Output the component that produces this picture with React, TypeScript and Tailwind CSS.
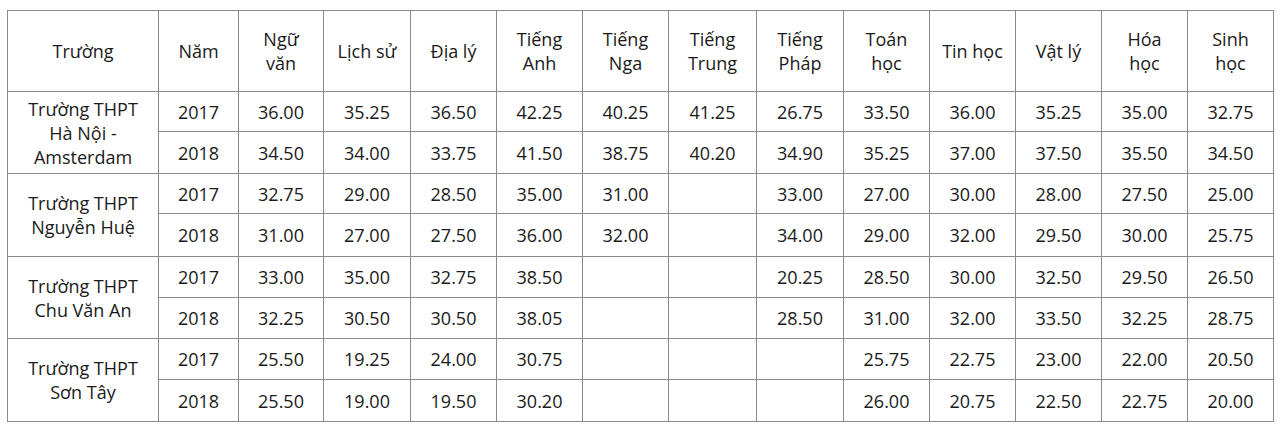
import React from "react";

const headers: string[][] = [
  ["Trường"],
  ["Năm"],
  ["Ngữ", "văn"],
  ["Lịch sử"],
  ["Địa lý"],
  ["Tiếng", "Anh"],
  ["Tiếng", "Nga"],
  ["Tiếng", "Trung"],
  ["Tiếng", "Pháp"],
  ["Toán", "học"],
  ["Tin học"],
  ["Vật lý"],
  ["Hóa", "học"],
  ["Sinh", "học"],
];

const widths = [151, 80, 85, 87, 86, 86, 86, 88, 87, 86, 86, 86, 86, 86];

type Group = { name: string[]; rows: { year: string; vals: string[]; h: string }[] };

const groups: Group[] = [
  {
    name: ["Trường THPT", "Hà Nội -", "Amsterdam"],
    rows: [
      { year: "2017", h: "h-[40px]", vals: ["36.00", "35.25", "36.50", "42.25", "40.25", "41.25", "26.75", "33.50", "36.00", "35.25", "35.00", "32.75"] },
      { year: "2018", h: "h-[42px]", vals: ["34.50", "34.00", "33.75", "41.50", "38.75", "40.20", "34.90", "35.25", "37.00", "37.50", "35.50", "34.50"] },
    ],
  },
  {
    name: ["Trường THPT", "Nguyễn Huệ"],
    rows: [
      { year: "2017", h: "h-[40px]", vals: ["32.75", "29.00", "28.50", "35.00", "31.00", "", "33.00", "27.00", "30.00", "28.00", "27.50", "25.00"] },
      { year: "2018", h: "h-[43px]", vals: ["31.00", "27.00", "27.50", "36.00", "32.00", "", "34.00", "29.00", "32.00", "29.50", "30.00", "25.75"] },
    ],
  },
  {
    name: ["Trường THPT", "Chu Văn An"],
    rows: [
      { year: "2017", h: "h-[41px]", vals: ["33.00", "35.00", "32.75", "38.50", "", "", "20.25", "28.50", "30.00", "32.50", "29.50", "26.50"] },
      { year: "2018", h: "h-[41px]", vals: ["32.25", "30.50", "30.50", "38.05", "", "", "28.50", "31.00", "32.00", "33.50", "32.25", "28.75"] },
    ],
  },
  {
    name: ["Trường THPT", "Sơn Tây"],
    rows: [
      { year: "2017", h: "h-[41px]", vals: ["25.50", "19.25", "24.00", "30.75", "", "", "", "25.75", "22.75", "23.00", "22.00", "20.50"] },
      { year: "2018", h: "h-[42px]", vals: ["25.50", "19.00", "19.50", "30.20", "", "", "", "26.00", "20.75", "22.50", "22.75", "20.00"] },
    ],
  },
];

const cell = "border border-[#8a8a8a] text-center align-middle p-0";

export default function App() {
  return (
    <div className="w-[1280px] h-[432px] bg-white pt-[10px] pl-[7px] text-[#1a1a1a] text-[18px] leading-[24px] [font-family:'Open_Sans',sans-serif]">
      <table className="table-fixed border-collapse w-[1267px]">
        <colgroup>
          {widths.map((w, i) => (
            <col key={i} style={{ width: w }} />
          ))}
        </colgroup>
        <thead>
          <tr className="h-[81px]">
            {headers.map((h, i) => (
              <th key={i} className={cell + " font-normal"}>
                {h.map((l, j) => (
                  <div key={j}>{l}</div>
                ))}
              </th>
            ))}
          </tr>
        </thead>
        <tbody>
          {groups.map((g, gi) =>
            g.rows.map((r, ri) => (
              <tr key={gi + "-" + ri} className={r.h}>
                {ri === 0 && (
                  <td rowSpan={2} className={cell + " leading-[24px]"}>
                    {g.name.map((l, j) => (
                      <div key={j}>{l}</div>
                    ))}
                  </td>
                )}
                <td className={cell}>{r.year}</td>
                {r.vals.map((v, vi) => (
                  <td key={vi} className={cell}>
                    {v}
                  </td>
                ))}
              </tr>
            ))
          )}
        </tbody>
      </table>
    </div>
  );
}
